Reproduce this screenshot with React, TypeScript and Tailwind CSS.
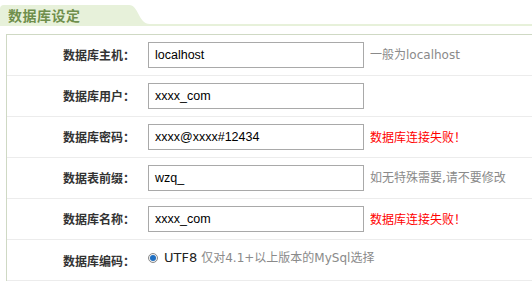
const CJK = '"Noto Sans CJK SC", sans-serif'

type Row = {
  label: string
  value?: string
  hint?: string
  error?: string
}

const rows: Row[] = [
  { label: '数据库主机', value: 'localhost', hint: '一般为localhost' },
  { label: '数据库用户', value: 'xxxx_com' },
  { label: '数据库密码', value: 'xxxx@xxxx#12434', error: '数据库连接失败！' },
  { label: '数据表前缀', value: 'wzq_', hint: '如无特殊需要,请不要修改' },
  { label: '数据库名称', value: 'xxxx_com', error: '数据库连接失败！' }
]

const Label = ({ children }: { children: React.ReactNode }) => (
  <div
    className="w-[133px] shrink-0 pr-[5px] text-right text-[12px] font-bold text-[#333]"
    style={{ fontFamily: CJK }}
  >
    {children}：
  </div>
)

export default function App() {
  return (
    <div className="h-[281px] w-[532px] overflow-hidden bg-white">
      {/* tab header */}
      <div className="relative h-[26px]">
        <div className="absolute left-0 top-[5px] flex h-[19px]">
          <div className="flex w-[126px] items-center rounded-tl-[4px] bg-[#e7f1da] pl-[8px]">
            <span
              className="text-[14px] font-bold leading-none tracking-[0.5px] text-[#6f8f4c]"
              style={{ fontFamily: CJK }}
            >
              数据库设定
            </span>
          </div>
          <svg width="24" height="19" viewBox="0 0 24 19">
            <path d="M0 0 H3 C13 0 12 19 24 19 H0 Z" fill="#e7f1da" />
          </svg>
        </div>
        <div className="absolute bottom-0 left-0 h-[2px] w-full bg-[#e7f1da]" />
      </div>

      {/* form table */}
      <div className="ml-[6px] mt-[8px] w-[560px] border-l border-t border-[#cfd9c4]">
        {rows.map((row) => (
          <div
            key={row.label}
            className="flex h-[41px] items-center border-b border-[#ececec]"
          >
            <Label>{row.label}</Label>
            <div className="flex items-center pl-[8px]">
              <div
                className="flex h-[26px] w-[216px] items-center border border-[#a9a9a9] pl-[6px] text-[12.5px] text-black"
                style={{ fontFamily: '"Liberation Sans", Arial, sans-serif' }}
              >
                {row.value}
              </div>
              {row.hint && (
                <span
                  className="ml-[6px] text-[12px] text-[#8a8a8a]"
                  style={{ fontFamily: '"DejaVu Sans", "Noto Sans CJK SC", sans-serif' }}
                >
                  {row.hint}
                </span>
              )}
              {row.error && (
                <span
                  className="ml-[6px] text-[12px] text-[#ff0000]"
                  style={{ fontFamily: CJK }}
                >
                  {row.error}
                </span>
              )}
            </div>
          </div>
        ))}

        <div className="flex h-[41px] items-start border-b border-[#ececec] pt-[8px]">
          <div className="pt-[4px]">
            <Label>数据库编码</Label>
          </div>
          <div className="flex items-center pl-[8px]">
            <span className="flex h-[10px] w-[10px] items-center justify-center rounded-full border border-[#8a8a8a] bg-[#f0f0f0]">
              <span className="h-[6px] w-[6px] rounded-full bg-[#1f6fc2]" />
            </span>
            <span
              className="ml-[6px] text-[13px] text-[#222]"
              style={{ fontFamily: '"DejaVu Sans", sans-serif' }}
            >
              UTF8
            </span>
            <span
              className="ml-[4px] text-[12px] text-[#8a8a8a]"
              style={{ fontFamily: '"DejaVu Sans", "Noto Sans CJK SC", sans-serif' }}
            >
              仅对4.1+以上版本的MySql选择
            </span>
          </div>
        </div>
      </div>
    </div>
  )
}
